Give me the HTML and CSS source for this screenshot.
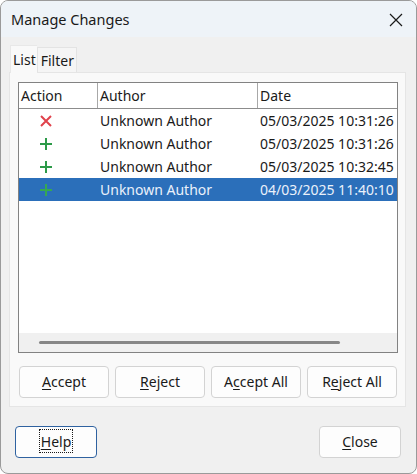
FILE: index.html
```html
<!DOCTYPE html>
<html>
<head>
<meta charset="utf-8">
<link rel="stylesheet" href="styles.css">
</head>
<body>
<div class="window">
  <div class="titlebar">
    <span class="title">Manage Changes</span>
    <svg class="close-x" width="14" height="14" viewBox="0 0 14 14"><path d="M1 1L13 13M13 1L1 13" stroke="#1a1a1a" stroke-width="1.2" fill="none"/></svg>
  </div>
  <div class="content">
    <div class="tabs">
      <div class="tab active">List</div>
      <div class="tab">Filter</div>
    </div>
    <div class="panel">
      <div class="list">
        <div class="row header">
          <div class="c c1">Action</div>
          <div class="c c2">Author</div>
          <div class="c c3">Date</div>
        </div>
        <div class="rows">
          <div class="row">
            <div class="c c1 icon"><svg width="14" height="14" viewBox="0 0 14 14"><path d="M2 2L12 12M12 2L2 12" stroke="#e0424c" stroke-width="2" fill="none"/></svg></div>
            <div class="c c2">Unknown Author</div>
            <div class="c c3">05/03/2025 10:31:26</div>
          </div>
          <div class="row">
            <div class="c c1 icon"><svg width="14" height="14" viewBox="0 0 14 14"><path d="M7 1V13M1 7H13" stroke="#2c9a48" stroke-width="2" fill="none"/></svg></div>
            <div class="c c2">Unknown Author</div>
            <div class="c c3">05/03/2025 10:31:26</div>
          </div>
          <div class="row">
            <div class="c c1 icon"><svg width="14" height="14" viewBox="0 0 14 14"><path d="M7 1V13M1 7H13" stroke="#2c9a48" stroke-width="2" fill="none"/></svg></div>
            <div class="c c2">Unknown Author</div>
            <div class="c c3">05/03/2025 10:32:45</div>
          </div>
          <div class="row selected">
            <div class="c c1 icon"><svg width="14" height="14" viewBox="0 0 14 14"><path d="M7 1V13M1 7H13" stroke="#35a853" stroke-width="2" fill="none"/></svg></div>
            <div class="c c2">Unknown Author</div>
            <div class="c c3">04/03/2025 11:40:10</div>
          </div>
        </div>
        <div class="hscroll"><div class="thumb"></div></div>
      </div>
      <div class="actions">
        <button class="btn"><u>A</u>ccept</button>
        <button class="btn"><u>R</u>eject</button>
        <button class="btn">A<u>c</u>cept All</button>
        <button class="btn">R<u>e</u>ject All</button>
      </div>
    </div>
    <div class="footer">
      <button class="btn fbtn default"><span class="focus"><u>H</u>elp</span></button>
      <button class="btn fbtn"><u>C</u>lose</button>
    </div>
  </div>
</div>
</body>
</html>
```
FILE: styles.css
```css
html, body {
  margin: 0;
  padding: 0;
  background: #ffffff;
}
body {
  font-family: "Noto Sans", "Open Sans", sans-serif;
  font-size: 14px;
  color: #1a1a1a;
}
.window {
  width: 417px;
  height: 474px;
  box-sizing: border-box;
  border: 1px solid #9a9a9a;
  border-radius: 8px;
  overflow: hidden;
  display: flex;
  flex-direction: column;
  background: #f0f0f0;
}
.titlebar {
  height: 36px;
  background: #eef3f8;
  display: flex;
  align-items: center;
  justify-content: space-between;
  padding: 0 13px 0 10px;
  flex: none;
}
.title {
  font-size: 14.5px;
  color: #1a1a1a;
}
.close-x { margin-top: 2px; }
.content {
  flex: 1;
  display: flex;
  flex-direction: column;
  padding: 0 10px 0 8px;
}
.tabs {
  display: flex;
  align-items: flex-end;
  height: 35px;
  padding-left: 1px;
}
.tab {
  height: 25px;
  line-height: 26px;
  padding: 0 2px 0 3px;
  background: #f5f5f5;
  border: 1px solid #e3e3e3;
  border-bottom: none;
  box-sizing: border-box;
}
.tab.active {
  height: 28px;
  line-height: 28px;
  padding: 0 1px 0 2px;
  background: #f9f9f9;
  border-color: #e8e8e8;
  border-right: none;
  position: relative;
  top: 1px;
}
.panel {
  background: #f9f9f9;
  border: 1px solid #e5e5e5;
  padding: 9px 7px 8px 8px;
  display: flex;
  flex-direction: column;
}
.list {
  height: 271px;
  box-sizing: border-box;
  border: 1px solid #828282;
  background: #ffffff;
  display: flex;
  flex-direction: column;
}
.row {
  display: flex;
  height: 23px;
  align-items: center;
}
.row.header {
  height: 25px;
  border-bottom: 1px solid #8c8c8c;
  background: #ffffff;
  flex: none;
}
.header .c {
  height: 25px;
  line-height: 25px;
}
.header .c1, .header .c2 {
  border-right: 1px solid #a8a8a8;
}
.c {
  box-sizing: border-box;
  padding-left: 2px;
  white-space: nowrap;
  overflow: hidden;
}
.c1 { width: 79px; }
.c2 { width: 160px; }
.c3 { flex: 1; }
.rows {
  flex: 1;
  display: flex;
  flex-direction: column;
}
.icon {
  display: flex;
  align-items: center;
  padding-left: 20px;
}
.row.selected {
  background: #2b6fba;
  color: #eaf1fa;
}
.hscroll {
  height: 19px;
  background: #f0f0f0;
  display: flex;
  align-items: center;
  padding-left: 20px;
  flex: none;
}
.thumb {
  width: 301px;
  height: 3px;
  border-radius: 2px;
  background: #868686;
}
.actions {
  display: flex;
  gap: 6px;
  margin-top: 13px;
  padding-left: 1px;
}
.btn {
  font-family: "Noto Sans", "Open Sans", sans-serif;
  font-size: 14px;
  color: #1a1a1a;
  background: #fdfdfd;
  border: 1px solid #d3d3d3;
  border-radius: 4px;
  height: 32px;
  width: 90px;
  padding: 0 0 2px 0;
  box-sizing: border-box;
}
.btn u { text-decoration-thickness: 1px; text-underline-offset: 2px; }
.footer {
  display: flex;
  justify-content: space-between;
  padding: 19px 5px 0 6px;
}
.fbtn { width: 82px; }
.fbtn.default {
  border-color: #2f62a0;
}
.focus {
  outline: 1px dotted #1a1a1a;
  padding: 2px 1px 1px 1px;
}
```
